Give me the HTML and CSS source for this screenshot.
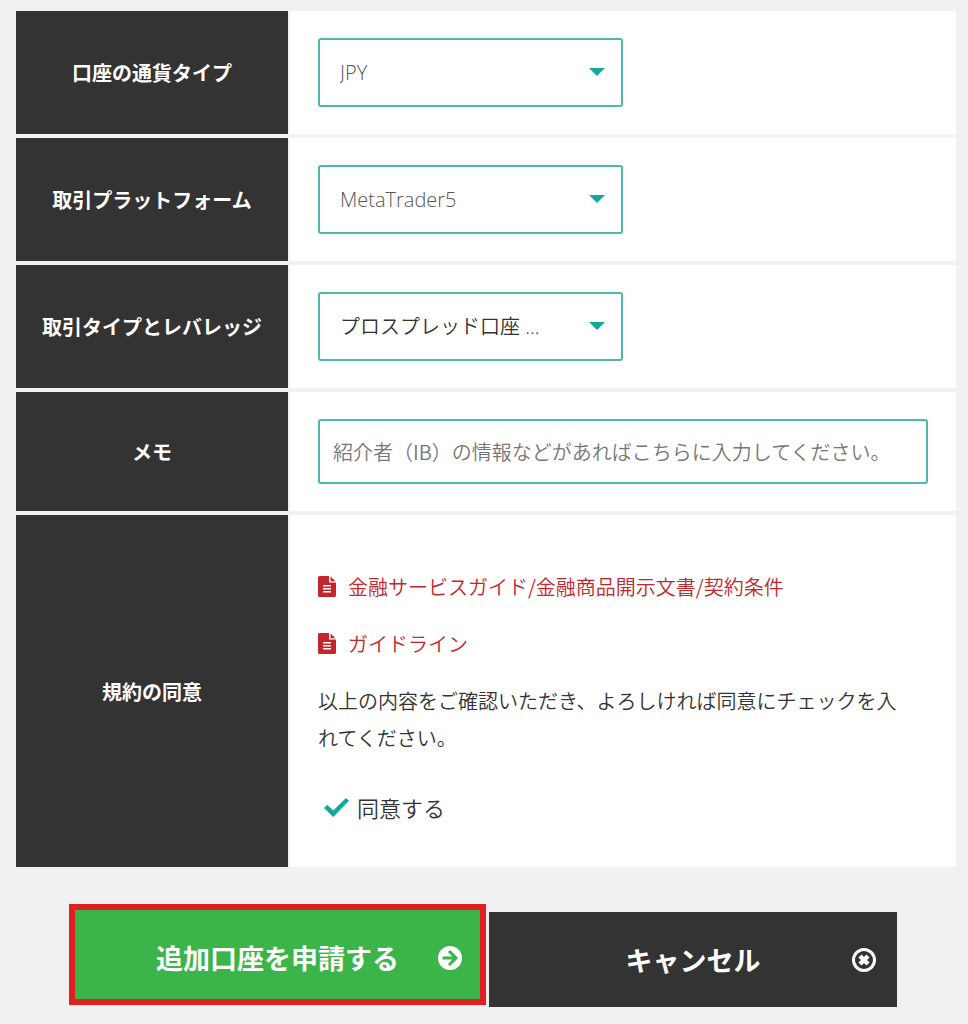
FILE: index.html
```
<!DOCTYPE html>
<html lang="ja">
<head>
  <meta charset="UTF-8">
  <meta name="viewport" content="width=device-width, initial-scale=1.0">
  <title>追加口座の申請</title>
  <link rel="stylesheet" href="styles.css">
</head>
<body>
  <form id="accountForm">
    <div class="rows">
      <div class="row">
        <label class="head" for="currency">口座の通貨タイプ</label>
        <div class="cell">
          <div class="select-box">
            <select id="currency">
              <option>JPY</option>
              <option>USD</option>
            </select>
          </div>
        </div>
      </div>
      <div class="row">
        <label class="head" for="platform">取引プラットフォーム</label>
        <div class="cell">
          <div class="select-box">
            <select id="platform">
              <option>MetaTrader5</option>
              <option>MetaTrader4</option>
            </select>
          </div>
        </div>
      </div>
      <div class="row">
        <label class="head" for="leverage">取引タイプとレバレッジ</label>
        <div class="cell">
          <div class="select-box">
            <select id="leverage" class="dark">
              <option>プロスプレッド口座 ...</option>
            </select>
          </div>
        </div>
      </div>
      <div class="row">
        <label class="head" for="memo">メモ</label>
        <div class="cell">
          <input type="text" id="memo" class="memo" placeholder="紹介者（IB）の情報などがあればこちらに入力してください。">
        </div>
      </div>
      <div class="row">
        <div class="head">規約の同意</div>
        <div class="cell terms">
          <a href="#" class="doc-link">
            <svg class="doc-icon" viewBox="0 0 18 21" aria-hidden="true">
              <path fill="#c1272d" d="M1.500 0H11v6.500h7V19.500a1.500 1.500 0 0 1-1.500 1.500h-15A1.500 1.500 0 0 1 0 19.500v-18A1.500 1.500 0 0 1 1.500 0z"/>
              <path fill="#c1272d" d="M12.500 0.500L17.500 5.200H12.500z"/>
              <path stroke="#fff" stroke-width="1.500" d="M5 9.800h8M5 12.800h8M5 15.800h8"/>
            </svg>
            金融サービスガイド/金融商品開示文書/契約条件
          </a>
          <a href="#" class="doc-link">
            <svg class="doc-icon" viewBox="0 0 18 21" aria-hidden="true">
              <path fill="#c1272d" d="M1.500 0H11v6.500h7V19.500a1.500 1.500 0 0 1-1.500 1.500h-15A1.500 1.500 0 0 1 0 19.500v-18A1.500 1.500 0 0 1 1.500 0z"/>
              <path fill="#c1272d" d="M12.500 0.500L17.500 5.200H12.500z"/>
              <path stroke="#fff" stroke-width="1.500" d="M5 9.800h8M5 12.800h8M5 15.800h8"/>
            </svg>
            ガイドライン
          </a>
          <p>以上の内容をご確認いただき、よろしければ同意にチェックを入れてください。</p>
          <label class="agree">
            <input type="checkbox" id="agree" checked>
            同意する
          </label>
        </div>
      </div>
    </div>

    <div class="buttons">
      <button type="submit" class="submit">
        <span>追加口座を申請する</span>
        <svg viewBox="0 0 24 24" aria-hidden="true">
          <circle cx="12" cy="12" r="12" fill="#fff"/>
          <path fill="none" stroke="#3bb54a" stroke-width="3" d="M4.500 12h13M11 5l7 7-7 7"/>
        </svg>
      </button>
      <button type="button" class="cancel">
        <span>キャンセル</span>
        <svg viewBox="0 0 24 24" aria-hidden="true">
          <circle cx="12" cy="12" r="10.500" fill="none" stroke="#fff" stroke-width="3"/>
          <path stroke="#fff" stroke-width="4.500" d="M8 8l8 8M16 8l-8 8"/>
        </svg>
      </button>
    </div>
  </form>
</body>
</html>
```
FILE: styles.css
```
* {
  box-sizing: border-box;
}

body {
  margin: 0;
  background-color: #f1f1f1;
  color: #333;
  font-family: "Noto Sans CJK JP", sans-serif;
  font-size: 20px;
  font-weight: 350;
}

.rows {
  display: flex;
  flex-direction: column;
  gap: 4px;
  margin: 11px 12px 0 16px;
}

.row {
  display: grid;
  grid-template-columns: 272px 1fr;
  gap: 2px;
}

.head {
  display: flex;
  align-items: center;
  justify-content: center;
  background-color: #333;
  color: #fff;
  font-weight: 700;
}

.cell {
  padding: 27px 28px;
  background-color: #fff;
}

.select-box {
  position: relative;
  width: 50%;
}

/* drop-down arrow */
.select-box::after {
  content: "";
  position: absolute;
  top: 30px;
  right: 18px;
  border: 8px solid transparent;
  border-top-color: #12a99a;
  border-bottom: 0;
  pointer-events: none;
}

select, .memo {
  display: block;
  width: 100%;
  background-color: #fff;
  border: 2px solid #4fb8ad;
  border-radius: 3px;
  font-size: 20px;
  font-weight: 350;
}

select {
  appearance: none;
  height: 69px;
  padding: 0 40px 0 20px;
  color: #555;
  font-family: "Open Sans", "Noto Sans CJK JP", sans-serif;
}

select.dark {
  color: #333;
}

.memo {
  height: 65px;
  padding: 0 13px;
  color: #333;
  font-family: "Noto Sans CJK JP", sans-serif;
}

.memo::placeholder {
  color: #777;
}

.terms {
  display: flex;
  flex-direction: column;
  align-items: flex-start;
  padding: 53px 40px 41px 28px;
  line-height: 37px;
}

.doc-link {
  display: flex;
  align-items: center;
  gap: 12px;
  margin-bottom: 20px;
  color: #c1272d;
  text-decoration: none;
}

.doc-icon {
  width: 18px;
  height: 21px;
}

.terms p {
  margin: 0 0 33px;
}

.agree {
  display: flex;
  align-items: center;
  gap: 8px;
  padding-left: 6px;
  font-size: 22px;
}

.agree input {
  appearance: none;
  width: 25px;
  height: 19px;
  margin: 0;
  background-color: #ccc;
  clip-path: polygon(0 52%, 13% 36%, 37% 66%, 88% 0, 100% 14%, 37% 100%);
}

.agree input:checked {
  background-color: #12a99a;
}

.buttons {
  display: grid;
  grid-template-columns: 417fr 408fr;
  align-items: start;
  gap: 3px;
  margin: 37px 71px 16px 69px;
}

.buttons button {
  display: grid;
  grid-template-columns: 24px 1fr 24px;
  align-items: center;
  border: 0;
  color: #fff;
  font-family: "Noto Sans CJK JP", sans-serif;
  font-size: 27px;
  font-weight: 700;
  cursor: pointer;
}

.buttons span {
  grid-column: 2;
}

.buttons svg {
  width: 24px;
  height: 24px;
}

.buttons .submit {
  height: 101px;
  padding: 6px 18px 0;
  border: 6px solid #e02020;
  background-color: #3bb54a;
}

.buttons .cancel {
  height: 95px;
  margin-top: 8px;
  padding: 0 21px;
  background-color: #333;
}
```
